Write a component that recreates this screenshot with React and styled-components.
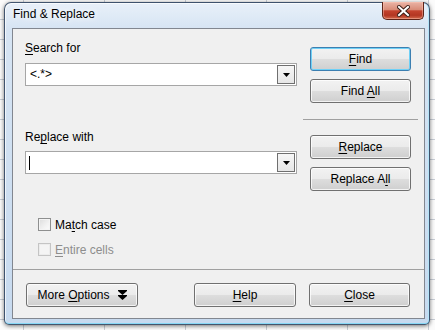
import styled, { createGlobalStyle, css } from 'styled-components'

const GlobalStyle = createGlobalStyle`
   html, body {
      margin: 0;
      padding: 0;
   }
   body {
      font-family: 'Liberation Sans', Arial, sans-serif;
      font-size: 12px;
      color: #000;
   }
   #root {
      width: 435px;
      height: 330px;
      overflow: hidden;
   }
`

export default function App() {
   return (
      <>
         <GlobalStyle />
         <Desktop>
            <Window>
               <TitleBar>
                  <Title>Find &amp; Replace</Title>
                  <CloseButton aria-label="Close">
                     <svg width="13" height="12" viewBox="0 0 13 12">
                        <path d="M2 2 L11 10 M11 2 L2 10" stroke="#3b1d16" strokeWidth="4" strokeLinecap="square" />
                        <path d="M2 2 L11 10 M11 2 L2 10" stroke="#fff" strokeWidth="2" strokeLinecap="square" />
                     </svg>
                  </CloseButton>
               </TitleBar>
               <Client>
                  <Main>
                     <LeftColumn>
                        <FieldLabel>
                           <U>S</U>earch for
                        </FieldLabel>
                        <Combo $gap={7}>
                           <ComboText>&lt;.*&gt;</ComboText>
                           <DropButton>
                              <svg width="7" height="4" viewBox="0 0 7 4">
                                 <path d="M0 0 H7 L3.5 4 Z" fill="#000" />
                              </svg>
                           </DropButton>
                        </Combo>

                        <FieldLabel $top={44}>
                           Re<U>p</U>lace with
                        </FieldLabel>
                        <Combo $gap={6}>
                           <ComboText>
                              <Caret />
                           </ComboText>
                           <DropButton>
                              <svg width="7" height="4" viewBox="0 0 7 4">
                                 <path d="M0 0 H7 L3.5 4 Z" fill="#000" />
                              </svg>
                           </DropButton>
                        </Combo>

                        <CheckRow $top={43}>
                           <CheckBox />
                           <span>
                              Ma<U>t</U>ch case
                           </span>
                        </CheckRow>
                        <CheckRow $top={10} $disabled>
                           <CheckBox $disabled />
                           <span>
                              <U>E</U>ntire cells
                           </span>
                        </CheckRow>
                     </LeftColumn>

                     <RightColumn>
                        <Button $focused>
                           <span>
                              <U>F</U>ind
                           </span>
                        </Button>
                        <Button>
                           <span>
                              Find <U>A</U>ll
                           </span>
                        </Button>
                        <Separator />
                        <Button>
                           <span>
                              <U>R</U>eplace
                           </span>
                        </Button>
                        <Button>
                           <span>
                              Replace A<U>l</U>l
                           </span>
                        </Button>
                     </RightColumn>
                  </Main>

                  <Footer>
                     <Button $width={112}>
                        <span>
                           More <U>O</U>ptions
                        </span>
                        <MoreIcon width="9" height="10" viewBox="0 0 9 10">
                           <path d="M0 0 H9 V1 L4.5 5 L0 1 Z M0 5 H9 V6 L4.5 10 L0 6 Z" fill="#000" />
                        </MoreIcon>
                     </Button>
                     <Button $width={102} $push>
                        <span>
                           <U>H</U>elp
                        </span>
                     </Button>
                     <Button>
                        <span>
                           <U>C</U>lose
                        </span>
                     </Button>
                  </Footer>
               </Client>
            </Window>
         </Desktop>
      </>
   )
}

// 바탕 (스프레드시트)
const Desktop = styled.div`
   box-sizing: border-box;
   width: 435px;
   height: 330px;
   padding: 2px 5px 0 4px;
   background-color: #fbfbfb;
   background-image: repeating-linear-gradient(
         to bottom,
         transparent 0,
         transparent 19px,
         #c9ced6 19px,
         #c9ced6 20px
      ),
      repeating-linear-gradient(to right, transparent 0, transparent 23px, #c9ced6 23px, #c9ced6 24px, transparent 24px, transparent 81px);
`

const Window = styled.div`
   box-sizing: border-box;
   width: 426px;
   height: 323px;
   padding: 0 4px 5px 7px;
   border: 1px solid rgba(38, 58, 86, 0.85);
   border-radius: 7px 7px 5px 5px;
   background: linear-gradient(180deg, #e8f0f9 0px, #d6e4f3 26px, #c7daef 100%);
   box-shadow: 0 1px 4px rgba(0, 0, 0, 0.55), inset 0 -1px 0 #86d8f6, inset -1px 0 0 #b4e4f8, inset 1px 1px 0 rgba(255, 255, 255, 0.7);
`

const TitleBar = styled.div`
   display: flex;
   align-items: flex-start;
   height: 25px;
   padding-left: 1px;
`

const Title = styled.div`
   margin-top: 4px;
   line-height: 15px;
   font-size: 12px;
   text-shadow: 0 0 6px #fff, 0 0 10px rgba(255, 255, 255, 0.9);
`

const CloseButton = styled.div`
   display: flex;
   align-items: center;
   justify-content: center;
   box-sizing: border-box;
   width: 42px;
   height: 18px;
   margin: -1px 1px 0 auto;
   border: 1px solid #5e2418;
   border-top: none;
   border-radius: 0 0 5px 5px;
   background: linear-gradient(180deg, #eab4a6 0%, #d98c78 45%, #c4432e 52%, #b33622 78%, #d2694c 100%);
   box-shadow: inset 0 0 0 1px rgba(255, 200, 185, 0.45);
`

const Client = styled.div`
   box-sizing: border-box;
   height: 291px;
   border: 1px solid #828790;
   background: #f0f0f0;
   display: flex;
   flex-direction: column;
`

const Main = styled.div`
   display: flex;
   gap: 6px;
   height: 240px;
   padding-left: 12px;
`

const LeftColumn = styled.div`
   display: flex;
   flex-direction: column;
   width: 272px;
   padding-top: 12px;
`

const RightColumn = styled.div`
   display: flex;
   flex-direction: column;
   gap: 8px;
   width: 115px;
   padding-top: 18px;
   align-items: flex-start;

   & > button {
      margin-left: 7px;
   }
`

const FieldLabel = styled.div`
   line-height: 15px;
   margin-top: ${({ $top }) => $top || 0}px;
`

const U = styled.span`
   text-decoration: underline;
   text-underline-offset: 2px;
`

const Combo = styled.div`
   box-sizing: border-box;
   display: flex;
   align-items: center;
   height: 23px;
   margin-top: ${({ $gap }) => $gap}px;
   padding: 0 1px 0 4px;
   border: 1px solid #a6a6a6;
   background: #fff;
`

const ComboText = styled.div`
   flex: 1;
   display: flex;
   align-items: center;
   line-height: 21px;
   height: 21px;
`

const Caret = styled.span`
   display: block;
   width: 1px;
   height: 14px;
   margin-left: -1px;
   background: #000;
`

const DropButton = styled.div`
   box-sizing: border-box;
   display: flex;
   align-items: center;
   justify-content: center;
   width: 18px;
   height: 19px;
   border: 1px solid #6f6f6f;
   background: linear-gradient(180deg, #f6f6f6, #e6e6e6);
   padding-top: 1px;
`

const CheckRow = styled.div`
   display: flex;
   align-items: center;
   gap: 4px;
   height: 15px;
   margin-top: ${({ $top }) => $top}px;
   margin-left: 13px;
   color: ${({ $disabled }) => ($disabled ? '#8d8d8d' : '#000')};
`

const CheckBox = styled.span`
   box-sizing: border-box;
   display: block;
   width: 13px;
   height: 13px;
   border: 1px solid ${({ $disabled }) => ($disabled ? '#c4c4c4' : '#8e8f8f')};
   background: ${({ $disabled }) =>
      $disabled ? '#f4f4f4' : 'linear-gradient(135deg, #dcdcdc 0%, #f2f2f2 60%, #fbfbfb 100%)'};
   box-shadow: inset 0 0 0 1px ${({ $disabled }) => ($disabled ? '#ececec' : '#f4f4f4')};
`

const Separator = styled.div`
   width: 115px;
   height: 1px;
   margin: 8px 0 7px;
   background: #a0a0a0;
`

const Button = styled.button`
   box-sizing: border-box;
   display: flex;
   align-items: center;
   justify-content: center;
   width: ${({ $width }) => $width || 101}px;
   height: 24px;
   padding: 0;
   margin-left: ${({ $push }) => ($push ? 'auto' : '0')};
   font-family: 'Liberation Sans', Arial, sans-serif;
   font-size: 12px;
   color: #000;
   border: 1px solid #707070;
   border-radius: 3px;
   background: linear-gradient(180deg, #f2f2f2 0%, #ebebeb 48%, #dddddd 52%, #cfcfcf 100%);
   box-shadow: inset 0 0 0 1px rgba(255, 255, 255, 0.75);

   ${({ $focused }) =>
      $focused &&
      css`
         border-color: #3c7fb1;
         box-shadow: inset 0 0 0 1px #6fd0f6;
      `}
`

const MoreIcon = styled.svg`
   margin-left: 8px;
`

const Footer = styled.div`
   display: flex;
   align-items: flex-start;
   gap: 13px;
   flex: 1;
   padding: 13px 14px 0 13px;
   border-top: 1px solid #a0a0a0;
`
